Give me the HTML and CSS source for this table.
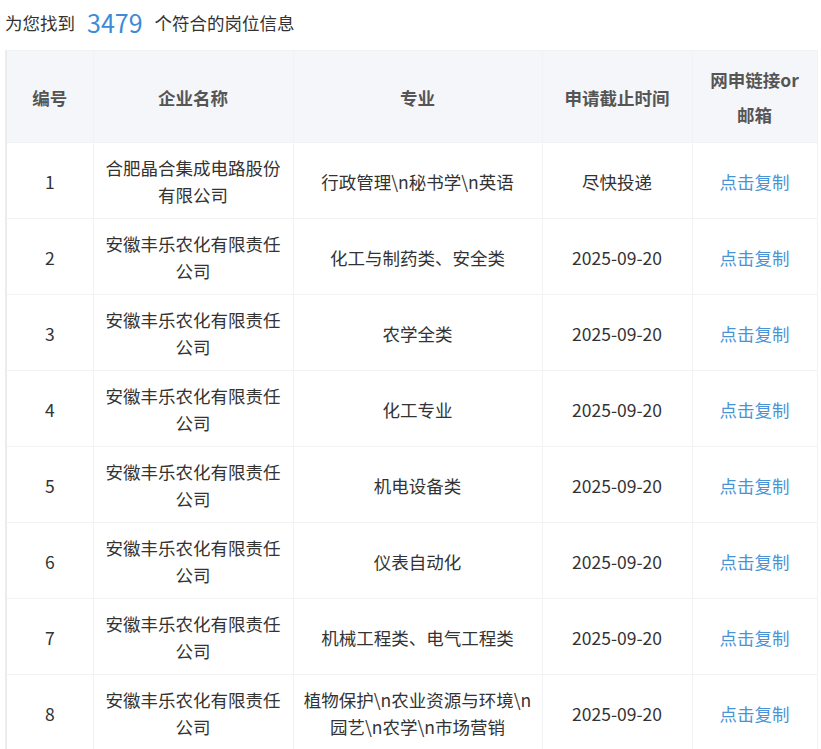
FILE: index.html
```html
<!DOCTYPE html>
<html lang="zh-CN">
<head>
<meta charset="utf-8">
<title>岗位信息</title>
<link rel="stylesheet" href="styles.css">
</head>
<body>
<div class="page">
  <div class="summary">为您找到<span class="count">3479</span>个符合的岗位信息</div>
  <table class="jobs">
    <colgroup>
      <col class="c-no"><col class="c-name"><col class="c-major"><col class="c-date"><col class="c-link">
    </colgroup>
    <thead>
      <tr><th>编号</th><th>企业名称</th><th>专业</th><th>申请截止时间</th><th>网申链接or邮箱</th></tr>
    </thead>
    <tbody>
      <tr><td>1</td><td>合肥晶合集成电路股份有限公司</td><td>行政管理\n秘书学\n英语</td><td>尽快投递</td><td><a class="copy">点击复制</a></td></tr>
      <tr><td>2</td><td>安徽丰乐农化有限责任公司</td><td>化工与制药类、安全类</td><td>2025-09-20</td><td><a class="copy">点击复制</a></td></tr>
      <tr><td>3</td><td>安徽丰乐农化有限责任公司</td><td>农学全类</td><td>2025-09-20</td><td><a class="copy">点击复制</a></td></tr>
      <tr><td>4</td><td>安徽丰乐农化有限责任公司</td><td>化工专业</td><td>2025-09-20</td><td><a class="copy">点击复制</a></td></tr>
      <tr><td>5</td><td>安徽丰乐农化有限责任公司</td><td>机电设备类</td><td>2025-09-20</td><td><a class="copy">点击复制</a></td></tr>
      <tr><td>6</td><td>安徽丰乐农化有限责任公司</td><td>仪表自动化</td><td>2025-09-20</td><td><a class="copy">点击复制</a></td></tr>
      <tr><td>7</td><td>安徽丰乐农化有限责任公司</td><td>机械工程类、电气工程类</td><td>2025-09-20</td><td><a class="copy">点击复制</a></td></tr>
      <tr><td>8</td><td>安徽丰乐农化有限责任公司</td><td>植物保护\n农业资源与环境\n园艺\n农学\n市场营销</td><td>2025-09-20</td><td><a class="copy">点击复制</a></td></tr>
    </tbody>
  </table>
</div>
</body>
</html>
```
FILE: styles.css
```css
html, body {
  margin: 0;
  padding: 0;
  background: #ffffff;
}
body {
  font-family: "Noto Sans CJK SC", "Noto Sans", sans-serif;
  color: #333333;
  font-size: 17.5px;
}
.page {
  padding: 0 5px;
}
.summary {
  height: 44px;
  display: flex;
  align-items: center;
  color: #333333;
  font-size: 17.5px;
}
.count {
  font-size: 25px;
  color: #3d8ad6;
  margin: 0 12px;
  line-height: 1;
}
.jobs {
  margin-top: 6px;
  width: 811px;
  table-layout: fixed;
  border-collapse: collapse;
  border-left: 2px solid #ececec;
  border-right: 1px solid #f0f0f0;
}
.c-no { width: 87px; }
.c-name { width: 200px; }
.c-major { width: 249px; }
.c-date { width: 150px; }
.c-link { width: 125px; }
.jobs th, .jobs td {
  border: 1px solid #f1f2f4;
  text-align: center;
  vertical-align: middle;
}
.jobs th {
  background: #f5f6f9;
  color: #555555;
  font-weight: bold;
  line-height: 35px;
  padding: 11px 10px 10px;
}
.jobs td {
  color: #333333;
  line-height: 27px;
  padding: 11px 10px 10px;
}
.date {
  letter-spacing: 0.4px;
}
.copy {
  color: #4a94d6;
  cursor: pointer;
}
```
